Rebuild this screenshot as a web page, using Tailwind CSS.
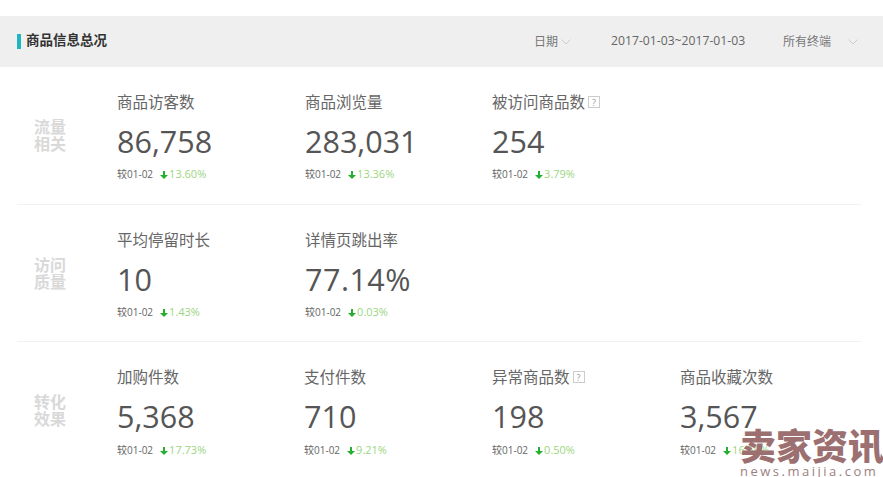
<!DOCTYPE html>
<html lang="zh-CN">
<head>
  <meta charset="UTF-8">
  <title>商品信息总况</title>
  <script src="https://cdn.jsdelivr.net/npm/@tailwindcss/browser@4"></script>
</head>
<body class="bg-white overflow-hidden font-['Open_Sans','Noto_Sans_CJK_SC',sans-serif] text-[#666]">
  <div class="relative w-[883px] h-[477px] overflow-hidden pt-4">
    <!-- 标题栏 -->
    <div class="h-[51px] bg-[#efefef] flex items-center pl-[17px]">
      <div class="w-1 h-[15px] bg-[#1fb5c4]"></div>
      <h1 class="ml-[5px] mb-[2px] w-[508px] text-[13.5px] font-bold text-[#333]">商品信息总况</h1>
      <span class="text-[12px] text-[#777]">日期</span>
      <svg class="ml-[3px] w-[10px] h-[6px]" viewBox="0 0 10 6" fill="none" stroke="#ccc"><path d="M.5.5 5 5 9.5.5"/></svg>
      <span class="ml-[40px] w-[172px] text-[12.2px] text-[#666]">2017-01-03~2017-01-03</span>
      <span class="text-[12px] text-[#777]">所有终端</span>
      <svg class="ml-[17px] w-[10px] h-[6px]" viewBox="0 0 10 6" fill="none" stroke="#ccc"><path d="M.5.5 5 5 9.5.5"/></svg>
    </div>

    <!-- 流量相关 -->
    <section class="mx-[17px] w-[844px] h-[138px] border-b border-[#f2f2f2] flex">
      <div class="w-[100px] pl-[17px] pt-[52px] text-[16px] leading-[17px] font-bold text-[#d9d9d9]">流量<br>相关</div>
      <div class="w-[188px] pt-[23px]">
        <div class="h-6 text-[15.5px] leading-6">商品访客数</div>
        <div class="mt-[8px] h-[38px] text-[30.5px] leading-[38px] text-[#555]">86,758</div>
        <div class="mt-[6px] flex items-center text-[10px] text-[#666]">较01-02
          <svg class="ml-[7px] w-2 h-2 mt-[2px]" viewBox="0 0 8 8" fill="#22b02e"><path d="M3 0h2v4h3L4 8 0 4h3z"/></svg>
          <span class="ml-[1px] text-[11px] text-[#9bd67f]">13.60%</span>
        </div>
      </div>
      <div class="w-[187px] pt-[23px]">
        <div class="h-6 text-[15.5px] leading-6">商品浏览量</div>
        <div class="mt-[8px] h-[38px] text-[30.5px] leading-[38px] text-[#555]">283,031</div>
        <div class="mt-[6px] flex items-center text-[10px] text-[#666]">较01-02
          <svg class="ml-[7px] w-2 h-2 mt-[2px]" viewBox="0 0 8 8" fill="#22b02e"><path d="M3 0h2v4h3L4 8 0 4h3z"/></svg>
          <span class="ml-[1px] text-[11px] text-[#9bd67f]">13.36%</span>
        </div>
      </div>
      <div class="w-[188px] pt-[23px]">
        <div class="h-6 flex items-center text-[15.5px] leading-6">被访问商品数
          <span class="ml-[3px] w-3 h-3 border border-[#ccc] flex items-center justify-center text-[9px] leading-none text-[#999]">?</span>
        </div>
        <div class="mt-[8px] h-[38px] text-[30.5px] leading-[38px] text-[#555]">254</div>
        <div class="mt-[6px] flex items-center text-[10px] text-[#666]">较01-02
          <svg class="ml-[7px] w-2 h-2 mt-[2px]" viewBox="0 0 8 8" fill="#22b02e"><path d="M3 0h2v4h3L4 8 0 4h3z"/></svg>
          <span class="ml-[1px] text-[11px] text-[#9bd67f]">3.79%</span>
        </div>
      </div>
    </section>

    <!-- 访问质量 -->
    <section class="mx-[17px] w-[844px] h-[137px] border-b border-[#f2f2f2] flex">
      <div class="w-[100px] pl-[17px] pt-[52px] text-[16px] leading-[17px] font-bold text-[#d9d9d9]">访问<br>质量</div>
      <div class="w-[188px] pt-[23px]">
        <div class="h-6 text-[15.5px] leading-6">平均停留时长</div>
        <div class="mt-[8px] h-[38px] text-[30.5px] leading-[38px] text-[#555]">10</div>
        <div class="mt-[6px] flex items-center text-[10px] text-[#666]">较01-02
          <svg class="ml-[7px] w-2 h-2 mt-[2px]" viewBox="0 0 8 8" fill="#22b02e"><path d="M3 0h2v4h3L4 8 0 4h3z"/></svg>
          <span class="ml-[1px] text-[11px] text-[#9bd67f]">1.43%</span>
        </div>
      </div>
      <div class="w-[187px] pt-[23px]">
        <div class="h-6 text-[15.5px] leading-6">详情页跳出率</div>
        <div class="mt-[8px] h-[38px] text-[30.5px] leading-[38px] text-[#555] tracking-[0.5px]">77.14%</div>
        <div class="mt-[6px] flex items-center text-[10px] text-[#666]">较01-02
          <svg class="ml-[7px] w-2 h-2 mt-[2px]" viewBox="0 0 8 8" fill="#22b02e"><path d="M3 0h2v4h3L4 8 0 4h3z"/></svg>
          <span class="ml-[1px] text-[11px] text-[#9bd67f]">0.03%</span>
        </div>
      </div>
    </section>

    <!-- 转化效果 -->
    <section class="mx-[17px] w-[844px] h-[134px] flex">
      <div class="w-[100px] pl-[17px] pt-[52px] text-[16px] leading-[17px] font-bold text-[#d9d9d9]">转化<br>效果</div>
      <div class="w-[187px] pt-[23px]">
        <div class="h-6 text-[15.5px] leading-6">加购件数</div>
        <div class="mt-[8px] h-[38px] text-[30.5px] leading-[38px] text-[#555]">5,368</div>
        <div class="mt-[7px] flex items-center text-[10px] text-[#666]">较01-02
          <svg class="ml-[7px] w-2 h-2 mt-[2px]" viewBox="0 0 8 8" fill="#22b02e"><path d="M3 0h2v4h3L4 8 0 4h3z"/></svg>
          <span class="ml-[1px] text-[11px] text-[#9bd67f]">17.73%</span>
        </div>
      </div>
      <div class="w-[188px] pt-[23px]">
        <div class="h-6 text-[15.5px] leading-6">支付件数</div>
        <div class="mt-[8px] h-[38px] text-[30.5px] leading-[38px] text-[#555]">710</div>
        <div class="mt-[7px] flex items-center text-[10px] text-[#666]">较01-02
          <svg class="ml-[7px] w-2 h-2 mt-[2px]" viewBox="0 0 8 8" fill="#22b02e"><path d="M3 0h2v4h3L4 8 0 4h3z"/></svg>
          <span class="ml-[1px] text-[11px] text-[#9bd67f]">9.21%</span>
        </div>
      </div>
      <div class="w-[188px] pt-[23px]">
        <div class="h-6 flex items-center text-[15.5px] leading-6">异常商品数
          <span class="ml-[3px] w-3 h-3 border border-[#ccc] flex items-center justify-center text-[9px] leading-none text-[#999]">?</span>
        </div>
        <div class="mt-[8px] h-[38px] text-[30.5px] leading-[38px] text-[#555]">198</div>
        <div class="mt-[7px] flex items-center text-[10px] text-[#666]">较01-02
          <svg class="ml-[7px] w-2 h-2 mt-[2px]" viewBox="0 0 8 8" fill="#22b02e"><path d="M3 0h2v4h3L4 8 0 4h3z"/></svg>
          <span class="ml-[1px] text-[11px] text-[#9bd67f]">0.50%</span>
        </div>
      </div>
      <div class="w-[180px] pt-[23px]">
        <div class="h-6 text-[15.5px] leading-6">商品收藏次数</div>
        <div class="mt-[8px] h-[38px] text-[30.5px] leading-[38px] text-[#555]">3,567</div>
        <div class="mt-[7px] flex items-center text-[10px] text-[#666]">较01-02
          <svg class="ml-[7px] w-2 h-2 mt-[2px]" viewBox="0 0 8 8" fill="#22b02e"><path d="M3 0h2v4h3L4 8 0 4h3z"/></svg>
          <span class="ml-[1px] text-[11px] text-[#9bd67f]">16.56%</span>
        </div>
      </div>
    </section>

    <!-- 水印 -->
    <div class="absolute left-[740px] top-[428px] w-[143px]">
      <div class="text-[36px] leading-[37px] font-black text-[#9c7070] whitespace-nowrap">卖家资讯</div>
      <div class="mt-[-1px] text-[13px] leading-[14px] tracking-[2.5px] text-[#9c8080] whitespace-nowrap">news.maijia.com</div>
    </div>
  </div>
</body>
</html>
